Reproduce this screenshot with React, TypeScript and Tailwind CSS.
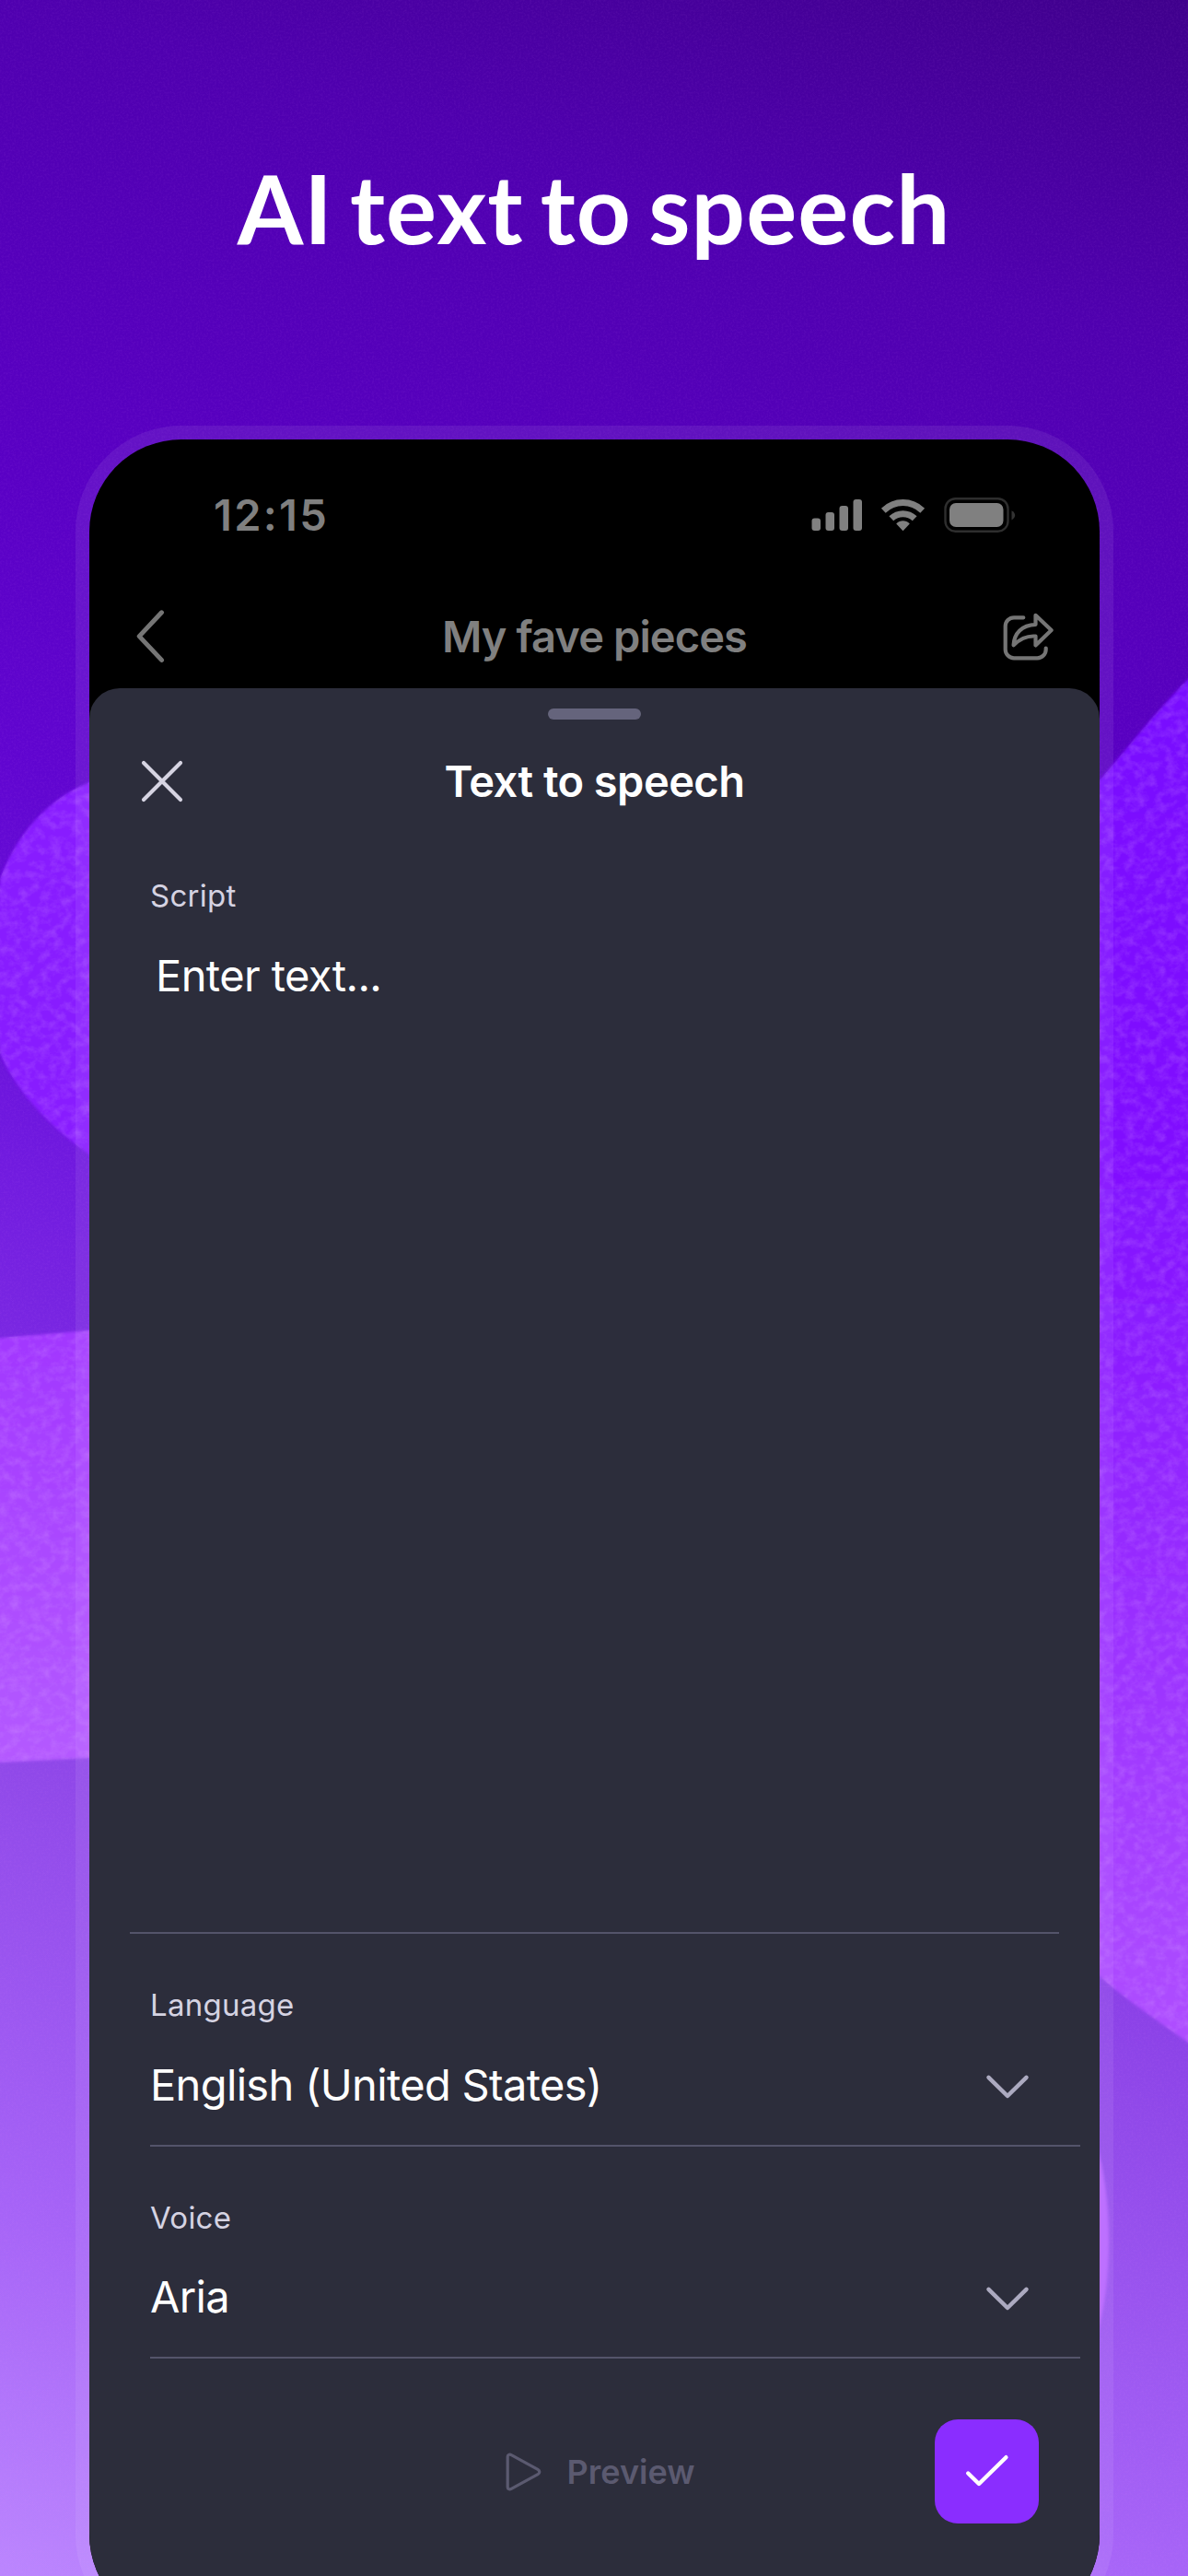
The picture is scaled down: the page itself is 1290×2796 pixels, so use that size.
import type { ReactNode } from "react";

const inter = "font-['Inter','Liberation_Sans',sans-serif]";

function Backdrop() {
  return (
    <svg
      className="absolute inset-0 h-full w-full"
      viewBox="0 0 1290 2796"
      preserveAspectRatio="none"
      aria-hidden="true"
    >
      <defs>
        <linearGradient id="sky" gradientUnits="userSpaceOnUse" x1="1290" y1="0" x2="414" y2="2920">
          <stop offset="0" stopColor="#3f008c" />
          <stop offset="0.12" stopColor="#4f00af" />
          <stop offset="0.28" stopColor="#5900c4" />
          <stop offset="0.38" stopColor="#6005d0" />
          <stop offset="0.5" stopColor="#6e17de" />
          <stop offset="0.58" stopColor="#7a28e2" />
          <stop offset="0.725" stopColor="#9049e9" />
          <stop offset="0.876" stopColor="#a664f7" />
          <stop offset="1" stopColor="#bb86fe" />
        </linearGradient>
        <linearGradient id="wave" gradientUnits="userSpaceOnUse" x1="0" y1="1440" x2="0" y2="1915">
          <stop offset="0" stopColor="#a136ff" />
          <stop offset="1" stopColor="#b45aff" />
        </linearGradient>
        <linearGradient id="ribbon" gradientUnits="userSpaceOnUse" x1="0" y1="740" x2="0" y2="2210">
          <stop offset="0" stopColor="#7808ff" />
          <stop offset="0.35" stopColor="#800fff" />
          <stop offset="0.7" stopColor="#9a30ff" />
          <stop offset="1" stopColor="#ae4eff" />
        </linearGradient>
        <filter id="soft" x="-5%" y="-5%" width="110%" height="110%">
          <feGaussianBlur stdDeviation="1.6" />
        </filter>
        <filter id="grain" x="0" y="0" width="100%" height="100%">
          <feTurbulence type="fractalNoise" baseFrequency="0.45" numOctaves="2" seed="4" />
          <feColorMatrix values="0 0 0 0 0.85  0 0 0 0 0.3  0 0 0 0 1  0.9 0 0 0 -0.36" />
        </filter>
        <filter id="felt" x="0" y="0" width="100%" height="100%">
          <feTurbulence type="fractalNoise" baseFrequency="0.09 0.11" numOctaves="4" seed="9" />
          <feColorMatrix values="0 0 0 0 0.75  0 0 0 0 0.45  0 0 0 0 1  1.1 0 0 0 -0.42" />
        </filter>
        <clipPath id="shapes">
          <path d="M120 842C60 856 20 900 0 954C-6 985 -6 1112 0 1143C18 1186 60 1232 120 1268Z" />
          <path d="M0 1452L120 1442V1907L0 1913Z" />
          <path d="M1290 737C1262 762 1225 812 1180 863V2132C1215 2166 1250 2188 1290 2217Z" />
        </clipPath>
      </defs>
      <rect width="1290" height="2796" fill="url(#sky)" />
      <rect width="1290" height="2796" filter="url(#grain)" opacity="0.15" />
      <g filter="url(#soft)">
        <path
          d="M120 842C60 856 20 900 0 954C-6 985 -6 1112 0 1143C18 1186 60 1232 120 1268Z"
          fill="#881aff"
        />
        <path d="M-20 1454L120 1442V1907L-20 1914Z" fill="url(#wave)" />
        <path
          d="M1310 718C1262 762 1225 812 1180 863V2132C1215 2166 1250 2188 1310 2231Z"
          fill="url(#ribbon)"
        />
        <ellipse cx="1160" cy="2432" rx="44" ry="145" fill="#b865ff" />
      </g>
      <g clipPath="url(#shapes)">
        <rect width="1290" height="2796" filter="url(#felt)" opacity="0.38" />
      </g>
    </svg>
  );
}

function StatusBar() {
  return (
    <div className="flex h-[164px] items-center pr-[91px] pl-[135px]">
      <span className="text-[47px] font-semibold tracking-[2.3px] text-[#808080]">12:15</span>
      <svg className="ml-auto h-[38px] w-[224px]" viewBox="0 0 224 38" fill="#808080">
        <rect x="2.5" y="22.5" width="9.5" height="13.5" rx="3" />
        <rect x="17.5" y="16" width="9.5" height="20" rx="3" />
        <rect x="32.5" y="9" width="9.5" height="27" rx="3" />
        <rect x="47.5" y="2" width="9.5" height="34" rx="3" />
        <g fill="none" stroke="#808080" strokeWidth="7">
          <path d="M80.3 14.2C92.5 2.7 110.5 2.7 122.7 14.2" />
          <path d="M88.8 22.8C96 16 107 16 114.2 22.8" />
        </g>
        <path d="M94.2 28.5C98.3 24.2 104.7 24.2 108.8 28.5L101.5 36.2Z" />
        <rect x="147.5" y="1.2" width="68" height="35.5" rx="11" fill="none" stroke="#2e2e2e" strokeWidth="2.4" />
        <rect x="152" y="6" width="58.5" height="26" rx="7" />
        <path d="M219.5 14.2C224.3 16.5 224.3 22 219.5 24.4Z" fill="#333" />
      </svg>
    </div>
  );
}

function NavBar() {
  return (
    <div className="flex h-[106px] items-start justify-between pr-[50px] pl-[50px]">
      <svg
        className="mt-[20px] h-[58px] w-[33px]"
        viewBox="0 0 33 58"
        fill="none"
        stroke="#757575"
        strokeWidth="5"
        strokeLinecap="round"
        strokeLinejoin="round"
      >
        <path d="M28.5 3.8L4.2 29.6L28.5 55.4" />
      </svg>
      <h2 className="mt-[20px] ml-[23px] text-[47px] leading-[60px] font-semibold tracking-[-0.9px] text-[#808080]">
        My fave pieces
      </h2>
      <svg
        className="mt-[21px] h-[56px] w-[56px]"
        viewBox="0 0 56 56"
        fill="none"
        stroke="#757575"
        strokeWidth="4.2"
        strokeLinecap="round"
        strokeLinejoin="round"
      >
        <path d="M23.3 8.3H13A9.3 9.3 0 0 0 3.7 17.6V43A9.3 9.3 0 0 0 13 52.3H38.4A9.3 9.3 0 0 0 47.7 43V41.5" />
        <path d="M36.5 5.8L53.6 22L36.5 38.4V28.6C27 27.8 19.5 31.5 12.6 38.2C13.2 25.5 21.5 16.4 36.5 15.8Z" />
      </svg>
    </div>
  );
}

function SelectField({ label, value }: { label: string; value: string }) {
  return (
    <div className="ml-[66px] h-[230.5px] w-[1010px] border-b-2 border-[#54546a] pt-[57px]">
      <Label>{label}</Label>
      <div className="mt-[37px] flex h-[60px] items-center justify-between pr-[54px]">
        <span className="text-[47px] tracking-[-0.65px] text-white">{value}</span>
        <svg
          className="mt-[3px] h-[30px] w-[50px]"
          viewBox="0 0 50 30"
          fill="none"
          stroke="#acaac0"
          strokeWidth="4.5"
          strokeLinecap="round"
          strokeLinejoin="round"
        >
          <path d="M4.5 4.8L25 25L45.5 4.8" />
        </svg>
      </div>
    </div>
  );
}

function Label({ children }: { children: ReactNode }) {
  return <div className="h-[40px] text-[33px] leading-[40px] tracking-[0.25px] text-[#d5d3e2]">{children}</div>;
}

function SpeechSheet() {
  return (
    <section className="flex flex-1 flex-col rounded-t-[33px] bg-[#2c2d3b]">
      <div className="mx-auto mt-[22px] h-[12px] w-[101px] rounded-full bg-[#65647c]" />

      <div className="mt-[37px] flex h-[60px] items-center justify-between px-[55px]">
        <svg
          className="h-[48px] w-[48px]"
          viewBox="0 0 48 48"
          fill="none"
          stroke="#d6d4e2"
          strokeWidth="4.2"
          strokeLinecap="round"
        >
          <path d="M4 4L44 44M44 4L4 44" />
        </svg>
        <h3 className="text-[47px] font-semibold tracking-[-0.55px] text-white">Text to speech</h3>
        <div className="w-[48px]" />
      </div>

      <div className="mt-[74px] ml-[66px]">
        <Label>Script</Label>
      </div>
      <div className="mx-[44px] mt-[37px] h-[1070px] border-b-2 border-[#54546a] pl-[28px] text-[47px] leading-[60px] tracking-[-0.6px] text-white">
        Enter text...
      </div>

      <SelectField label="Language" value="English (United States)" />
      <SelectField label="Voice" value="Aria" />

      <div className="mt-[66px] flex h-[113px] items-center justify-between pr-[66px]">
        <div className="w-[113px]" />
        <button className="ml-[77px] flex items-center gap-[28px] text-[36px] font-semibold text-[#5b5a70]">
          <svg
            className="h-[42px] w-[40px]"
            viewBox="0 0 40 42"
            fill="none"
            stroke="#5b5a70"
            strokeWidth="3.2"
            strokeLinejoin="round"
          >
            <path d="M3.2 4.6C3.2 2.4 5.2 1.4 7.2 2.6L36 18.3C38.4 19.8 38.4 22.2 36 23.7L7.2 39.4C5.2 40.6 3.2 39.6 3.2 37.4Z" />
          </svg>
          Preview
        </button>
        <button className="flex h-[113px] w-[113px] items-center justify-center rounded-[25px] bg-[#8a2dff]">
          <svg
            className="h-[38px] w-[50px]"
            viewBox="0 0 50 38"
            fill="none"
            stroke="white"
            strokeWidth="4.4"
            strokeLinecap="round"
            strokeLinejoin="round"
          >
            <path d="M5.2 20.5L17 32L46.4 3.2" />
          </svg>
        </button>
      </div>
    </section>
  );
}

export default function App() {
  return (
    <div className={`relative h-[2796px] w-[1290px] overflow-hidden bg-[#5900c4] ${inter}`}>
      <Backdrop />
      <main className="relative">
        <h1 className="h-[462px] pt-[165px] text-center font-['Lato','Inter',sans-serif] text-[103px] leading-[120px] font-bold tracking-[1.1px] [word-spacing:-8px] text-white">
          AI text to speech
        </h1>
        <div className="ml-[82px] w-[1127px] rounded-[115px] bg-white/[0.07] p-[15px]">
          <div className="flex h-[2374px] flex-col overflow-hidden rounded-[100px] bg-black">
            <StatusBar />
            <NavBar />
            <SpeechSheet />
          </div>
        </div>
      </main>
    </div>
  );
}
